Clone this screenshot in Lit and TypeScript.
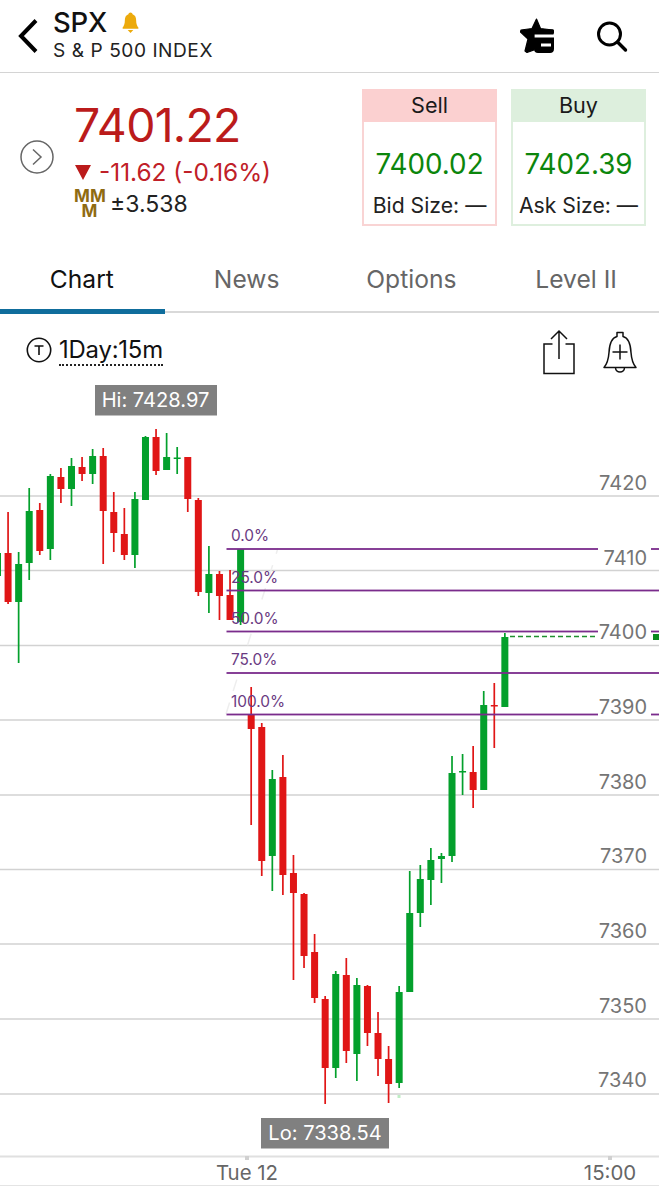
import { LitElement, html, css, svg } from "lit";
import { customElement } from "lit/decorators.js";

// index, wickTop, wickBottom, bodyTop, bodyBottom
const G: number[][] = [
  [0, 552, 578, 553, 576],
  [2, 552, 663, 564, 602],
  [3, 488, 580, 511, 563],
  [5, 474, 560, 476, 549],
  [7, 458, 506, 466, 489],
  [9, 449, 484, 456, 474],
  [13, 492, 568, 499, 555],
  [14, 436, 500, 437, 500],
  [16, 433, 470, 457, 470],
  [17, 447, 474, 457.5, 459],
  [20, 546, 613, 574, 593],
  [23, 549, 625, 549, 622],
  [26, 770, 891, 779, 856],
  [32, 971, 1078, 974, 1068],
  [34, 978, 1081, 985, 1054],
  [38, 986, 1088, 992, 1083],
  [39, 871, 992, 913, 992],
  [40, 865, 927, 879, 913],
  [41, 848, 905, 860, 880],
  [42, 853, 883, 856, 859],
  [43, 756, 862, 773, 856],
  [44, 754, 795, 771, 772.5],
  [46, 691, 790, 705, 790],
  [48, 633, 707, 637, 707],
];
const R: number[][] = [
  [1, 512, 604, 553, 602],
  [4, 503, 555, 510, 551],
  [6, 468, 503, 477, 489],
  [8, 457, 481, 467, 474],
  [10, 448, 564, 456, 511],
  [11, 492, 552, 512, 533],
  [12, 508, 560, 534, 555],
  [15, 429, 475, 437, 471],
  [18, 457, 512, 457, 499],
  [19, 498, 596, 500, 592],
  [21, 571, 620, 574, 596],
  [22, 570, 620, 595, 620],
  [24, 687, 825, 714, 729],
  [25, 723, 876, 727, 861],
  [27, 755, 895, 777, 875],
  [28, 855, 980, 873, 893],
  [29, 893, 968, 894, 956],
  [30, 934, 1003, 952, 998],
  [31, 996, 1104, 999, 1068],
  [33, 958, 1063, 975, 1051],
  [35, 985, 1046, 986, 1033],
  [36, 1012, 1076, 1033, 1059],
  [37, 1046, 1103, 1059, 1084],
  [45, 746, 808, 772, 790],
  [47, 683, 748, 705, 706.5],
];

const GRID = [
  [496, "7420", 482],
  [570.5, "7410", 557],
  [645.5, "7400", 631],
  [720, "7390", 706],
  [795, "7380", 781],
  [869.5, "7370", 855],
  [944, "7360", 930],
  [1019, "7350", 1005],
  [1094, "7340", 1079],
] as [number, string, number][];

const FIB = [
  [549, "0.0%", 535, true],
  [590.5, "25.0%", 577, false],
  [631.5, "50.0%", 618, true],
  [673, "75.0%", 659, false],
  [714.5, "100.0%", 701, true],
] as [number, string, number, boolean][];

const cx = (i: number) => -2.5 + i * 10.57;

@customElement("app-root")
export class AppRoot extends LitElement {
  static styles = css`
    :host {
      display: block;
      width: 659px;
      height: 1200px;
      background: #fff;
      overflow: hidden;
      font-family: Inter, "Liberation Sans", sans-serif;
      color: #111;
    }
    .header {
      height: 72px;
      border-bottom: 1px solid #d4d4d4;
      display: flex;
      align-items: center;
      padding: 0 31px 0 16px;
      box-sizing: content-box;
    }
    .back { width: 24px; height: 38px; margin-right: 13px; }
    .titles { flex: 1; display: flex; flex-direction: column; margin-top: -1px; }
    .sym { display: flex; align-items: center; gap: 15px; font-size: 27.5px; font-weight: 500; line-height: 26px; letter-spacing: -0.2px; }
    .sym svg { width: 17px; height: 21px; margin-top: 0; }
    .name { font-size: 19.1px; line-height: 24px; margin-top: 3px; letter-spacing: 0.55px; color: #222; }
    .acts { display: flex; align-items: center; gap: 40px; }
    .star { width: 35px; height: 36px; }
    .search { width: 33px; height: 33px; }

    .quote { height: 182px; display: flex; padding: 16px 13px 0 20px; box-sizing: border-box; }
    .go { width: 34px; height: 34px; margin-top: 51px; margin-right: 20px; flex: none; }
    .prices { flex: 1; display: flex; flex-direction: column; }
    .price { font-size: 46.4px; line-height: 54px; color: #bb1b1b; font-weight: 400; letter-spacing: -0.7px; margin-top: 9px; }
    .chg { display: flex; align-items: center; gap: 8px; font-size: 24.4px; line-height: 28px; color: #c02028; margin-top: 6px; }
    .tri { width: 16px; height: 16px; margin-left: 1px; }
    .mmrow { display: flex; align-items: center; gap: 5px; margin-top: 3px; }
    .mm { width: 31px; font-size: 17px; line-height: 14.5px; font-weight: 700; color: #8f6b12; text-align: center; letter-spacing: 0.2px; flex: none; }
    .mmv { font-size: 23px; color: #222; }
    .boxes { display: flex; gap: 14px; }
    .box { width: 135px; height: 137px; box-sizing: border-box; border: 2px solid; border-top: none; display: flex; flex-direction: column; align-items: center; }
    .box.s { border-color: #f9d4d4; }
    .box.b { border-color: #deefde; }
    .bh { align-self: stretch; height: 33px; margin: 0 -2px; padding-bottom: 2px; box-sizing: border-box; display: flex; align-items: center; justify-content: center; font-size: 21.6px; color: #1a1a1a; }
    .s .bh { background: #fbd0d0; }
    .b .bh { background: #ddefdd; }
    .bv { font-size: 27.8px; color: #0c860c; margin-top: 25px; line-height: 34px; }
    .bs { font-size: 21.2px; color: #222; margin-top: 11px; line-height: 26px; white-space: nowrap; }

    .tabs { height: 58px; display: grid; grid-template-columns: repeat(4, 1fr); box-sizing: border-box; border-bottom: 2.5px solid #d9d9d9; }
    .tab { display: flex; align-items: center; justify-content: center; font-size: 24.6px; color: #666; padding: 0 1px 9px 0; box-sizing: border-box; position: relative; }
    .tab.on { color: #111; }
    .tab.on::after { content: ""; position: absolute; left: 0; right: 0; bottom: -2.5px; height: 5px; background: #0f6d9c; }

    .tools { height: 72px; display: flex; align-items: flex-start; padding: 16px 21px 0 26px; box-sizing: border-box; }
    .tf { width: 26px; height: 26px; margin-top: 8px; margin-right: 7px; }
    .period { font-size: 23.9px; line-height: 29px; border-bottom: 2px dotted #222; height: 29px; margin-top: 6px; letter-spacing: -0.2px; color: #111; flex: none; }
    .sp { flex: 1; }
    .share { width: 34px; height: 46px; margin-right: 26px; }
    .bellp { width: 36px; height: 46px; }

    .chart { display: block; width: 659px; height: 801px; }
    .ax { font-size: 20px; fill: #757575; text-anchor: end; }
    .fibt { font-size: 15.4px; fill: #6a3a82; }
    .tag { font-size: 20.1px; fill: #fff; text-anchor: middle; }
    .tick { font-size: 20.4px; fill: #666; text-anchor: middle; }
  `;

  private candle(c: number[], col: string) {
    const x = cx(c[0]);
    return svg`<rect x=${x - 0.85} y=${c[1]} width="1.7" height=${c[2] - c[1]} fill=${col}/>
      <rect x=${x - 3.5} y=${c[3]} width="7" height=${c[4] - c[3]} fill=${col}/>`;
  }

  private chart() {
    const purple = "#7a2c8c";
    return html`<svg class="chart" viewBox="0 385 659 801" xmlns="http://www.w3.org/2000/svg">
      ${GRID.map(([y]) => svg`<rect x="0" y=${y - 0.75} width="659" height="1.5" fill="#d2d2d2"/>`)}
      <path d="M226 714 L278 548" stroke="#eeeeee" stroke-width="1.5" stroke-dasharray="12 12" fill="none"/>
      ${R.map((c) => this.candle(c, "#e01616"))}
      ${G.map((c) => this.candle(c, "#04a02c"))}
      ${FIB.map(
        ([y, t, ty, gap]) => svg`
          <text class="fibt" x="231" y=${ty + 5.5}>${t}</text>
          ${gap
            ? svg`<rect x="226.5" y=${y - 0.9} width="371.5" height="1.8" fill=${purple}/>
                  <rect x="651" y=${y - 0.9} width="8" height="1.8" fill=${purple}/>`
            : svg`<rect x="226.5" y=${y - 0.9} width="432.5" height="1.8" fill=${purple}/>`}
        `
      )}
      <line x1="510" y1="636.5" x2="596" y2="636.5" stroke="#1f8f2f" stroke-width="1.6" stroke-dasharray="5 3"/>
      <rect x="653" y="634" width="6" height="6" fill="#0a8a1e"/>
      <rect x="397.5" y="1095" width="3" height="3" fill="#bfeec5"/>
      ${GRID.map(([, t, ty]) => svg`<text class="ax" x="647" y=${ty + 7.5}>${t}</text>`)}
      <rect x="95" y="385" width="122" height="30.5" fill="#808080"/>
      <text class="tag" x="155.5" y="407">Hi: 7428.97</text>
      <rect x="261" y="1118" width="128" height="30.5" fill="#808080"/>
      <text class="tag" x="325" y="1140">Lo: 7338.54</text>
      <rect x="0" y="1155.5" width="659" height="2" fill="#e0e0e0"/>
      <rect x="245" y="1156" width="4" height="4" fill="#d0d0d0"/>
      <rect x="608" y="1156" width="4" height="4" fill="#d0d0d0"/>
      <text class="tick" x="247" y="1180">Tue 12</text>
      <text class="tick" x="610" y="1180">15:00</text>
      <rect x="0" y="1185" width="659" height="1" fill="#e4e4e4"/>
    </svg>`;
  }

  render() {
    return html`
      <div class="header">
        <svg class="back" viewBox="0 0 24 38"><path d="M20 3.500 L5 19 L20 34.500" fill="none" stroke="#000" stroke-width="4"/></svg>
        <div class="titles">
          <div class="sym">SPX
            <svg viewBox="0 0 18 22"><path d="M9 .5c1.200 0 2 .8 2.200 1.800C14 3.200 15 5.800 15 9c0 3.400.8 5.600 2.400 7.600.3.500 0 1-.5 1H1.100c-.5 0-.8-.5-.5-1C2.200 14.600 3 12.400 3 9c0-3.200 1-5.800 3.800-6.700C7 1.300 7.800.5 9 .5z" fill="#ecaa0c"/><path d="M6 19h6l-3 3z" fill="#ecaa0c"/></svg>
          </div>
          <div class="name">S &amp; P 500 INDEX</div>
        </div>
        <div class="acts">
          <svg class="star" viewBox="0 0 35 36"><path d="M16.500 1L20.500 10.500 33 12V16H14V32L7 34.500 5 33 8 21 .5 14 1 12 12 10.500Z" fill="#000" stroke="#000" stroke-width="1.200" stroke-linejoin="round"/><path d="M14 11.500H32.500C33.500 11.500 34 12 34 13V15.500H14Z" fill="#000"/><path d="M14 19.500H34V31C34 33.500 32.500 35 30 35H18C15.500 35 14 33.500 14 31Z" fill="#000"/><rect x="21" y="25.500" width="10" height="3" fill="#fff"/></svg>
          <svg class="search" viewBox="0 0 33 33"><circle cx="14.500" cy="14" r="11" fill="none" stroke="#000" stroke-width="3"/><path d="M22.500 22l8 8" stroke="#000" stroke-width="3.400" stroke-linecap="round"/></svg>
        </div>
      </div>

      <div class="quote">
        <svg class="go" viewBox="0 0 34 34"><circle cx="17" cy="17" r="16" fill="none" stroke="#666" stroke-width="1.500"/><path d="M13 9.500 L21 17 L13 24.500" fill="none" stroke="#666" stroke-width="1.500"/></svg>
        <div class="prices">
          <div class="price">7401.22</div>
          <div class="chg">
            <svg class="tri" viewBox="0 0 16 16"><path d="M0 1h16L8 16z" fill="#bb1b1b"/></svg>
            <span>-11.62 (-0.16%)</span>
          </div>
          <div class="mmrow">
            <div class="mm">MM<br />M</div>
            <div class="mmv">±3.538</div>
          </div>
        </div>
        <div class="boxes">
          <div class="box s">
            <div class="bh">Sell</div>
            <div class="bv">7400.02</div>
            <div class="bs">Bid Size: —</div>
          </div>
          <div class="box b">
            <div class="bh">Buy</div>
            <div class="bv">7402.39</div>
            <div class="bs">Ask Size: —</div>
          </div>
        </div>
      </div>

      <div class="tabs">
        <div class="tab on">Chart</div>
        <div class="tab">News</div>
        <div class="tab">Options</div>
        <div class="tab">Level II</div>
      </div>

      <div class="tools">
        <svg class="tf" viewBox="0 0 26 26"><circle cx="13" cy="13" r="11.700" fill="none" stroke="#111" stroke-width="1.600"/><path d="M8.500 9h9M13 9v9" fill="none" stroke="#111" stroke-width="1.600"/></svg>
        <div class="period">1Day:15m</div>
        <div class="sp"></div>
        <svg class="share" viewBox="0 0 34 46"><path d="M10.500 15H2v29.500h30V15h-8.500" fill="none" stroke="#111" stroke-width="1.500"/><path d="M17 2v28M9 10l8-8 8 8" fill="none" stroke="#111" stroke-width="1.500"/></svg>
        <svg class="bellp" viewBox="0 0 36 46"><path d="M2 38.500c3.500-4 4.500-8 5-15C7.500 13 11 8.500 15 7.500V3.500h6v4c4 1 7.500 5.500 8 16 .5 7 1.500 11 5 15z" fill="none" stroke="#111" stroke-width="1.500" stroke-linejoin="round"/><path d="M13.500 38.500c0 6 9 6 9 0" fill="none" stroke="#111" stroke-width="1.500"/><path d="M18 15.500v15M10.500 23h15" fill="none" stroke="#111" stroke-width="1.500"/></svg>
      </div>

      ${this.chart()}
    `;
  }
}
